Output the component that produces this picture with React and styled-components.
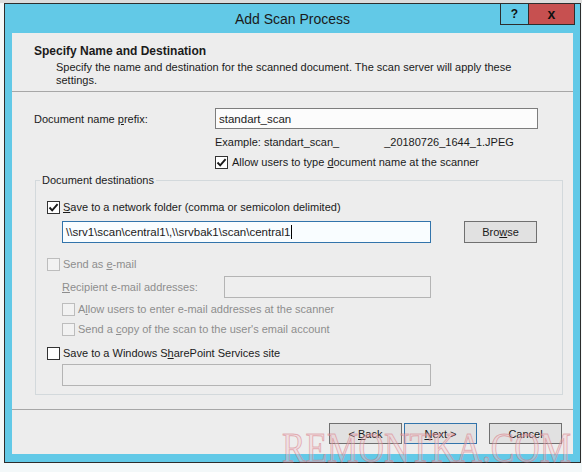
import React from "react";
import styled, { createGlobalStyle } from "styled-components";

const GlobalStyle = createGlobalStyle`
  html, body {
    margin: 0;
    padding: 0;
    background: #f3f8f9;
  }
  body {
    font-family: "Liberation Sans", Arial, sans-serif;
    font-size: 11px;
    color: #1b1b1b;
  }
`;

const Desktop = styled.div`
  position: relative;
  width: 582px;
  height: 472px;
  overflow: hidden;
  box-sizing: border-box;
  padding: 3px 0 0 4px;
  background: linear-gradient(#dcdcdc 0 3px, #f3f8f9 3px);
`;

const Window = styled.div`
  width: 577px;
  height: 460px;
  box-sizing: border-box;
  border: 1px solid #2d2d2d;
  background: #62c9e7;
  display: flex;
  flex-direction: column;
`;

const TitleBar = styled.div`
  height: 29px;
  flex-shrink: 0;
  display: grid;
  grid-template-columns: 1fr auto 1fr;
  align-items: center;
`;

const Title = styled.div`
  grid-column: 2;
  font-size: 14px;
  color: #1a1a1a;
  padding-top: 1px;
`;

const Caption = styled.div`
  grid-column: 3;
  justify-self: end;
  align-self: start;
  display: flex;
  margin: -1px 5px 0 0;
`;

const CaptionButton = styled.div`
  width: ${(p) => p.w}px;
  height: 22px;
  box-sizing: border-box;
  border: 1px solid #2d2d2d;
  border-right: ${(p) => (p.close ? "1px solid #2d2d2d" : "none")};
  background: ${(p) => (p.close ? "#c75050" : "#62c9e7")};
  display: flex;
  align-items: center;
  justify-content: center;
  font-weight: bold;
  font-size: ${(p) => (p.close ? "14px" : "12px")};
  color: #111;
  padding-bottom: 1px;
`;

const Panel = styled.div`
  flex: 1;
  margin: 0 7px 8px 7px;
  background: #ededed;
  display: flex;
  flex-direction: column;
`;

const Header = styled.div`
  padding: 11px 22px 4px 22px;
  border-bottom: 1px solid #a7a7a7;
`;

const HeaderTitle = styled.div`
  font-weight: bold;
  font-size: 12px;
  line-height: 15px;
`;

const HeaderDesc = styled.div`
  margin: 2px 0 0 22px;
  line-height: 13px;
`;

const Body = styled.div`
  flex: 1;
  padding: 0 10px 0 22px;
`;

const PrefixRow = styled.div`
  display: flex;
  align-items: center;
  margin-top: 16px;
`;

const Label = styled.div`
  width: ${(p) => p.w}px;
  flex-shrink: 0;
  color: ${(p) => (p.disabled ? "#8d8d8d" : "inherit")};
`;

const TextBox = styled.div`
  width: ${(p) => p.w}px;
  height: ${(p) => p.h || 22}px;
  box-sizing: border-box;
  border: 1px solid
    ${(p) => (p.focus ? "#3274ab" : p.disabled ? "#b4b4b4" : "#7d7d7d")};
  background: ${(p) =>
    p.focus ? "#f9fdff" : p.disabled ? "#eeeeee" : "#fcfcfc"};
  margin-left: ${(p) => p.ml || 0}px;
  display: flex;
  align-items: center;
  padding-left: 3px;
  font-size: 11.5px;
  white-space: nowrap;
`;

const Caret = styled.span`
  display: inline-block;
  width: 1px;
  height: 14px;
  background: #000;
  margin-left: 1px;
`;

const Indented = styled.div`
  margin: ${(p) => p.mt}px 0 0 181px;
  line-height: 14px;
  height: 14px;
  display: flex;
  align-items: center;
`;

const Redacted = styled.span`
  display: inline-block;
  width: 45px;
`;

const CheckRow = styled.div`
  display: flex;
  align-items: center;
  height: 14px;
  margin: ${(p) => p.mt}px 0 0 ${(p) => p.ml || 0}px;
  color: ${(p) => (p.disabled ? "#8d8d8d" : "inherit")};
`;

const Box = styled.span`
  width: 13px;
  height: 13px;
  box-sizing: border-box;
  flex-shrink: 0;
  border: 1px solid ${(p) => (p.disabled ? "#bdbdbd" : "#333")};
  background: ${(p) => (p.disabled ? "#f2f2f2" : "#fff")};
  margin-right: ${(p) => p.gap || 3}px;
  display: flex;
  align-items: center;
  justify-content: center;
`;

const U = styled.span`
  text-decoration: underline;
`;

const Group = styled.fieldset`
  margin: 4px 0 0 1px;
  padding: 0;
  border: 1px solid #d3d9dc;
  min-width: 0;
`;

const Legend = styled.legend`
  margin-left: 4px;
  padding: 0 2px;
  line-height: 14px;
`;

const GroupBody = styled.div`
  padding: 0 0 8px 11px;
`;

const Row = styled.div`
  display: flex;
  align-items: center;
  margin: ${(p) => p.mt}px 0 0 ${(p) => p.ml || 0}px;
`;

const Button = styled.div`
  width: 73px;
  height: ${(p) => p.h || 21}px;
  box-sizing: border-box;
  border: 1px solid ${(p) => (p.primary ? "#3274ab" : "#707070")};
  background: #e1e1e1;
  display: flex;
  align-items: center;
  justify-content: center;
  margin-left: ${(p) => p.ml || 0}px;
  color: #1b1b1b;
`;

const Footer = styled.div`
  height: 45px;
  box-sizing: border-box;
  border-top: 1px solid #a7a7a7;
  display: flex;
  justify-content: flex-end;
  align-items: flex-start;
  padding: 13px 11px 0 0;
`;

const Watermark = styled.div`
  position: absolute;
  left: 282px;
  top: 427px;
  font-family: "Liberation Serif", "Times New Roman", serif;
  font-size: 42px;
  line-height: 1;
  color: rgba(245, 200, 205, 0.35);
  -webkit-text-stroke: 1px rgba(214, 120, 130, 0.55);
  transform: scaleX(0.84);
  transform-origin: left top;
  pointer-events: none;
  white-space: nowrap;
`;

const Check = () => (
  <svg width="11" height="11" viewBox="0 0 11 11">
    <path d="M1.5 5.5 L4.2 8.3 L9.6 2.2" fill="none" stroke="#1a1a1a" strokeWidth="1.9" />
  </svg>
);

const CheckBox = ({ checked, disabled, gap }) => (
  <Box disabled={disabled} gap={gap}>
    {checked && <Check />}
  </Box>
);

const App = () => {
  return (
    <>
      <GlobalStyle />
      <Desktop>
        <Window>
          <TitleBar>
            <Title>Add Scan Process</Title>
            <Caption>
              <CaptionButton w={28}>?</CaptionButton>
              <CaptionButton w={47} close>
                x
              </CaptionButton>
            </Caption>
          </TitleBar>
          <Panel>
            <Header>
              <HeaderTitle>Specify Name and Destination</HeaderTitle>
              <HeaderDesc>
                Specify the name and destination for the scanned document. The scan server will apply these
                <br />
                settings.
              </HeaderDesc>
            </Header>
            <Body>
              <PrefixRow>
                <Label w={181}>
                  Document name <U>p</U>refix:
                </Label>
                <TextBox w={323} h={21}>
                  standart_scan
                </TextBox>
              </PrefixRow>
              <Indented mt={6}>
                Example: standart_scan_<Redacted />_20180726_1644_1.JPEG
              </Indented>
              <Indented mt={6}>
                <CheckBox checked gap={4} />
                <span>
                  Allow users to type <U>d</U>ocument name at the scanner
                </span>
              </Indented>

              <Group>
                <Legend>Document destinations</Legend>
                <GroupBody>
                  <CheckRow mt={13}>
                    <CheckBox checked />
                    <span>
                      <U>S</U>ave to a network folder (comma or semicolon delimited)
                    </span>
                  </CheckRow>
                  <Row mt={7} ml={15}>
                    <TextBox w={369} focus>
                      {"\\\\srv1\\scan\\central1\\,\\\\srvbak1\\scan\\central1"}
                      <Caret />
                    </TextBox>
                    <Button h={22} ml={33}>
                      <span>
                        Bro<U>w</U>se
                      </span>
                    </Button>
                  </Row>
                  <CheckRow mt={14} disabled>
                    <CheckBox disabled />
                    <span>
                      Send as <U>e</U>-mail
                    </span>
                  </CheckRow>
                  <Row mt={5} ml={15}>
                    <Label w={162} disabled>
                      <U>R</U>ecipient e-mail addresses:
                    </Label>
                    <TextBox w={207} disabled />
                  </Row>
                  <CheckRow mt={4} ml={15} disabled>
                    <CheckBox disabled />
                    <span>
                      A<U>l</U>low users to enter e-mail addresses at the scanner
                    </span>
                  </CheckRow>
                  <CheckRow mt={6} ml={15} disabled>
                    <CheckBox disabled />
                    <span>
                      Send a <U>c</U>opy of the scan to the user's email account
                    </span>
                  </CheckRow>
                  <CheckRow mt={10}>
                    <CheckBox />
                    <span>
                      Save to a Windows S<U>h</U>arePoint Services site
                    </span>
                  </CheckRow>
                  <Row mt={4} ml={15}>
                    <TextBox w={369} disabled />
                  </Row>
                </GroupBody>
              </Group>
            </Body>
            <Footer>
              <Button>
                <span>
                  &lt; <U>B</U>ack
                </span>
              </Button>
              <Button primary ml={2}>
                <span>
                  <U>N</U>ext &gt;
                </span>
              </Button>
              <Button ml={12}>Cancel</Button>
            </Footer>
          </Panel>
        </Window>
        <Watermark>REMONTKA.COM</Watermark>
      </Desktop>
    </>
  );
};

export default App;
